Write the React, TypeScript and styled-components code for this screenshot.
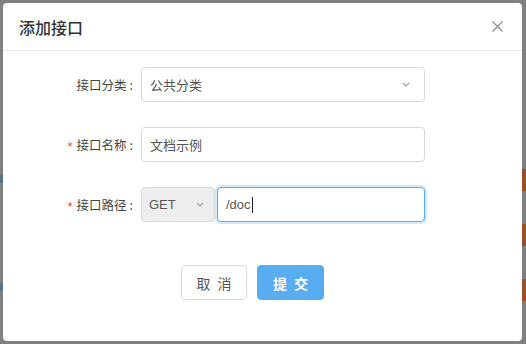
import React from "react";
import styled, { createGlobalStyle } from "styled-components";

const Global = createGlobalStyle`
  html, body { margin: 0; padding: 0; }
  body {
    font-family: "Liberation Sans", "Noto Sans CJK SC", sans-serif;
    -webkit-font-smoothing: antialiased;
  }
`;

const Backdrop = styled.div`
  width: 526px;
  height: 344px;
  box-sizing: border-box;
  padding: 3px 4px 3px 3px;
  background:
    linear-gradient(#9a4f2c, #9a4f2c) right 0 top 169px / 4px 22px no-repeat,
    linear-gradient(#9a4f2c, #9a4f2c) right 0 top 224px / 4px 22px no-repeat,
    linear-gradient(#9a4f2c, #9a4f2c) right 0 top 279px / 4px 22px no-repeat,
    linear-gradient(#5b6f8e, #5b6f8e) left 0 top 175px / 3px 8px no-repeat,
    linear-gradient(#5b6f8e, #5b6f8e) left 0 top 283px / 3px 8px no-repeat,
    #808080;
`;

const Modal = styled.div`
  width: 519px;
  height: 338px;
  background: #fff;
  border-radius: 4px;
  display: flex;
  flex-direction: column;
  overflow: hidden;
`;

const Header = styled.div`
  height: 47px;
  flex: none;
  display: flex;
  align-items: center;
  justify-content: space-between;
  padding: 0 19px 0 16px;
  border-bottom: 1px solid #e9e9e9;
`;

const Title = styled.div`
  font-family: "Noto Sans CJK SC", sans-serif;
  font-size: 16px;
  font-weight: 500;
  color: #333;
`;

const Close = styled.button`
  border: 0;
  background: none;
  padding: 0;
  width: 12px;
  height: 12px;
  display: flex;
  align-items: center;
  justify-content: center;
  cursor: pointer;
`;

const Body = styled.div`
  padding-top: 16px;
  display: flex;
  flex-direction: column;
  gap: 25px;
`;

const Row = styled.div`
  display: flex;
  align-items: center;
  height: 35px;
`;

const Label = styled.label`
  width: 138px;
  flex: none;
  box-sizing: border-box;
  padding-right: 8px;
  display: flex;
  justify-content: flex-end;
  align-items: center;
  font-family: "Noto Sans CJK SC", sans-serif;
  font-size: 12.5px;
  color: #444;
`;

const Star = styled.span`
  color: #f2462a;
  font-family: "Liberation Sans", sans-serif;
  font-size: 13px;
  margin-right: 4px;
  position: relative;
  top: 2px;
`;

const Colon = styled.span`
  margin-left: 3px;
`;

const Control = styled.div`
  width: 284px;
  display: flex;
  gap: 2px;
  height: 35px;
`;

const Box = styled.div<{ $width?: number; $gray?: boolean; $focused?: boolean }>`
  box-sizing: border-box;
  height: 35px;
  ${(p) => (p.$width ? `width: ${p.$width}px; flex: none;` : "flex: 1;")}
  border: 1px solid ${(p) => (p.$focused ? "#5aabf0" : "#d9d9d9")};
  box-shadow: ${(p) => (p.$focused ? "0 0 0 2px rgba(24,144,255,0.2)" : "none")};
  background: ${(p) => (p.$gray ? "#eeeeee" : "#fff")};
  border-radius: 4px;
  display: flex;
  align-items: center;
  justify-content: space-between;
  padding: 0 ${(p) => (p.$gray ? 10 : 14)}px 0 ${(p) => (p.$gray ? 7 : 8)}px;
  font-family: "Liberation Sans", "Noto Sans CJK SC", sans-serif;
  font-size: 13px;
  color: #555;
`;

const Value = styled.span`
  display: flex;
  align-items: center;
`;

const Caret = styled.span`
  display: inline-block;
  width: 1px;
  height: 16px;
  background: #222;
  margin-left: 1px;
`;

const Footer = styled.div`
  margin-top: 43px;
  padding-left: 178px;
  display: flex;
  gap: 10px;
`;

const Button = styled.button<{ $primary?: boolean }>`
  box-sizing: border-box;
  height: 35px;
  width: ${(p) => (p.$primary ? 67 : 66)}px;
  border-radius: 4px;
  border: 1px solid ${(p) => (p.$primary ? "#58acf0" : "#d9d9d9")};
  background: ${(p) => (p.$primary ? "#58acf0" : "#fff")};
  color: ${(p) => (p.$primary ? "#fff" : "#555")};
  font-family: "Noto Sans CJK SC", sans-serif;
  font-size: 14px;
  font-weight: ${(p) => (p.$primary ? 700 : 400)};
  letter-spacing: 2px;
  padding: 0 0 0 2px;
  cursor: pointer;
`;

const Chevron = () => (
  <svg width="8" height="5" viewBox="0 0 8 5">
    <path d="M0.8 0.8 L4 4 L7.2 0.8" fill="none" stroke="#999" strokeWidth="1.1" />
  </svg>
);

export default function App() {
  return (
    <>
      <Global />
      <Backdrop>
        <Modal>
          <Header>
            <Title>添加接口</Title>
            <Close aria-label="close">
              <svg width="11" height="11" viewBox="0 0 11 11">
                <path d="M0.5 0.5 L10.5 10.5 M10.5 0.5 L0.5 10.5" stroke="#8d8d99" strokeWidth="1.3" />
              </svg>
            </Close>
          </Header>
          <Body>
            <Row>
              <Label>
                接口分类<Colon>:</Colon>
              </Label>
              <Control>
                <Box>
                  <Value>公共分类</Value>
                  <Chevron />
                </Box>
              </Control>
            </Row>
            <Row>
              <Label>
                <Star>*</Star>接口名称<Colon>:</Colon>
              </Label>
              <Control>
                <Box>
                  <Value>文档示例</Value>
                </Box>
              </Control>
            </Row>
            <Row>
              <Label>
                <Star>*</Star>接口路径<Colon>:</Colon>
              </Label>
              <Control>
                <Box $width={74} $gray>
                  <Value>GET</Value>
                  <Chevron />
                </Box>
                <Box $focused>
                  <Value>
                    /doc<Caret />
                  </Value>
                </Box>
              </Control>
            </Row>
          </Body>
          <Footer>
            <Button>取 消</Button>
            <Button $primary>提 交</Button>
          </Footer>
        </Modal>
      </Backdrop>
    </>
  );
}
